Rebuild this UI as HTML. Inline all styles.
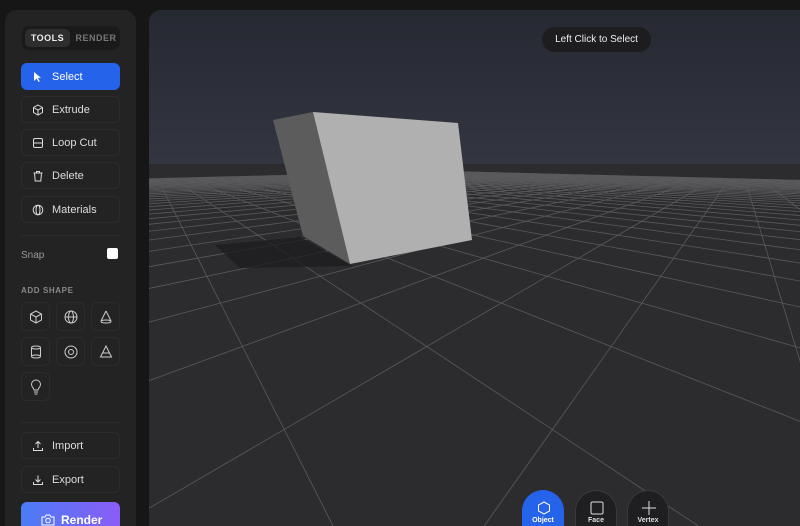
<!DOCTYPE html><html><head><style>
html,body{margin:0;width:800px;height:526px;overflow:hidden}
body{background:#161616;font-family:"Liberation Sans",sans-serif;position:relative}
.side{position:absolute;left:5px;top:10px;width:131px;height:516px;background:#232323;border-radius:12px 12px 0 0;overflow:hidden}
.tabs{position:absolute;left:17px;top:16px;width:98px;height:24px;background:#1a1a1a;border-radius:7px}
.tab{position:absolute;top:3px;height:18px;line-height:18px;font-size:9px;font-weight:bold;letter-spacing:.5px;text-align:center}
.btn{position:absolute;left:16px;width:99px;height:27px;border:1px solid #2c2c2c;border-radius:6px;color:#ddd;font-size:11px;line-height:27px;box-sizing:border-box}
.btn span{position:absolute;left:30px}
.btn svg{position:absolute;left:10px;top:7px}
.sq{position:absolute;width:29px;height:29px;border:1px solid #2c2c2c;border-radius:6px;box-sizing:border-box}
.sq svg{position:absolute;left:6px;top:6px}
.vp{position:absolute;left:149px;top:10px;width:651px;height:516px;border-radius:12px 0 0 0;overflow:hidden;background:#2c2c2f}
.pill{position:absolute;left:542px;top:27px;width:109px;height:25px;border-radius:13px;background:#1d1d1f;color:#eee;font-size:10px;line-height:25px;text-align:center}
.mode{position:absolute;top:490px;width:42px;height:36px;border-radius:21px 21px 0 0;background:#1f1f21;border:1px solid #3a3a3a;border-bottom:none;box-sizing:border-box;color:#ddd;font-size:7px;font-weight:bold;text-align:center;overflow:hidden}
.mode svg{position:absolute;left:13px;top:9px}
.mode div{position:absolute;top:26px;width:100%}
</style></head><body>
<div class="side">
<div class="tabs"><div class="tab" style="left:3px;width:45px;background:#2e2e2e;border-radius:5px;color:#eee">TOOLS</div><div class="tab" style="left:52px;width:44px;color:#777">RENDER</div></div>
<div class="btn" style="top:53px;background:#2563eb;border-color:#2563eb;color:#fff"><svg width="12" height="12" viewBox="0 0 12 12"><path d="M2 1v9l2.5-2.5 2 3.5 1.3-.7-2-3.4H9z" fill="#fff"/></svg><span>Select</span></div>
<div class="btn" style="top:86px"><svg width="12" height="12" viewBox="0 0 12 12" fill="none" stroke="#ddd"><path d="M6 1l4.5 2.5v5L6 11 1.5 8.5v-5zM1.5 3.5L6 6l4.5-2.5M6 6v5"/></svg><span>Extrude</span></div>
<div class="btn" style="top:119px"><svg width="12" height="12" viewBox="0 0 12 12" fill="none" stroke="#ddd"><rect x="1.5" y="1.5" width="9" height="9" rx="1.5"/><path d="M1.5 6h9"/></svg><span>Loop Cut</span></div>
<div class="btn" style="top:152px"><svg width="12" height="12" viewBox="0 0 12 12" fill="none" stroke="#ddd"><path d="M1.5 3h9M4.5 3V1.5h3V3M2.5 3l.7 8h5.6l.7-8"/></svg><span>Delete</span></div>
<div class="btn" style="top:186px"><svg width="12" height="12" viewBox="0 0 12 12" fill="none" stroke="#ddd"><circle cx="6" cy="6" r="4.8"/><ellipse cx="6" cy="6" rx="2" ry="4.8"/></svg><span>Materials</span></div>
<div style="position:absolute;left:16px;top:225px;width:99px;border-top:1px solid #2c2c2c"></div>
<div style="position:absolute;left:16px;top:240px;color:#999;font-size:10px">Snap</div>
<div style="position:absolute;left:102px;top:238px;width:11px;height:11px;background:#fff;border-radius:2px"></div>
<div style="position:absolute;left:16px;top:276px;color:#888;font-size:8px;font-weight:bold;letter-spacing:.6px">ADD SHAPE</div>
<div class="sq" style="left:16px;top:292px"><svg width="16" height="16" viewBox="0 0 16 16" fill="none" stroke="#ccc"><path d="M8 2l5.5 3v6L8 14l-5.5-3V5zM2.5 5L8 8l5.5-3M8 8v6"/></svg></div>
<div class="sq" style="left:51px;top:292px"><svg width="16" height="16" viewBox="0 0 16 16" fill="none" stroke="#ccc"><circle cx="8" cy="8" r="6"/><ellipse cx="8" cy="8" rx="2.5" ry="6"/><path d="M2 8h12"/></svg></div>
<div class="sq" style="left:86px;top:292px"><svg width="16" height="16" viewBox="0 0 16 16" fill="none" stroke="#ccc"><path d="M8 2L3 12M8 2l5 10"/><ellipse cx="8" cy="12.5" rx="5" ry="1.5"/></svg></div>
<div class="sq" style="left:16px;top:327px"><svg width="16" height="16" viewBox="0 0 16 16" fill="none" stroke="#ccc"><ellipse cx="8" cy="3.5" rx="4.5" ry="1.5"/><path d="M3.5 3.5v9M12.5 3.5v9"/><ellipse cx="8" cy="12.5" rx="4.5" ry="1.5"/></svg></div>
<div class="sq" style="left:51px;top:327px"><svg width="16" height="16" viewBox="0 0 16 16" fill="none" stroke="#ccc"><circle cx="8" cy="8" r="6"/><circle cx="8" cy="8" r="2.5"/></svg></div>
<div class="sq" style="left:86px;top:327px"><svg width="16" height="16" viewBox="0 0 16 16" fill="none" stroke="#ccc"><path d="M8 2l5.5 11h-11zM5 9h6"/></svg></div>
<div class="sq" style="left:16px;top:362px"><svg width="16" height="16" viewBox="0 0 16 16" fill="none" stroke="#ccc"><path d="M6 11c0-2-2.5-3-2.5-5.5a4.5 4.5 0 019 0C12.5 8 10 9 10 11zM6 13h4M6.5 15h3"/></svg></div>
<div style="position:absolute;left:16px;top:412px;width:99px;border-top:1px solid #2c2c2c"></div>
<div class="btn" style="top:422px"><svg width="12" height="12" viewBox="0 0 12 12" fill="none" stroke="#ddd"><path d="M6 8V1.5M3.5 4L6 1.5 8.5 4M1.5 8v2.5h9V8"/></svg><span>Import</span></div>
<div class="btn" style="top:456px"><svg width="12" height="12" viewBox="0 0 12 12" fill="none" stroke="#ddd"><path d="M6 1.5V8M3.5 5.5L6 8l2.5-2.5M1.5 8v2.5h9V8"/></svg><span>Export</span></div>
<div class="btn" style="top:492px;height:36px;line-height:36px;background:linear-gradient(90deg,#4a7cf6,#8b5cf6);border:none;color:#fff;font-weight:bold;font-size:12px"><svg style="left:20px;top:11px" width="14" height="13" viewBox="0 0 14 13" fill="none" stroke="#fff"><path d="M1 4h3l1.2-2h3.6L10 4h3v8H1z"/><circle cx="7" cy="7.5" r="2.3"/></svg><span style="left:40px">Render</span></div>
</div>
<div class="vp"><svg width="651" height="516" id="g">
<defs><linearGradient id="sky" x1="0" y1="0" x2="0" y2="1"><stop offset="0" stop-color="#262932"/><stop offset="1" stop-color="#333640"/></linearGradient></defs>
<rect width="651" height="155" fill="url(#sky)"/><rect y="154" width="651" height="372" fill="#2c2c2f"/>
</svg></div>
<svg style="position:absolute;left:0;top:0" width="800" height="526">
<polygon points="215,245 300,237 352,266 240,268" fill="#1e1e1f" opacity=".8"/>
<polygon points="273,120 313,112 350,264 303,236" fill="#5c5c5c"/>
<polygon points="313,112 458,123 472,240 350,264" fill="#b0b0b0"/>
</svg>
<div class="pill">Left Click to Select</div>
<div class="mode" style="left:522px;background:#2563eb;border-color:#2563eb;color:#fff"><svg width="16" height="16" viewBox="0 0 16 16" fill="none" stroke="#fff"><path d="M8 2l5.5 3v6L8 14l-5.5-3V5z"/></svg><div>Object</div></div>
<div class="mode" style="left:575px"><svg width="16" height="16" viewBox="0 0 16 16" fill="none" stroke="#ddd"><rect x="2" y="2" width="12" height="12" rx="1.5"/></svg><div>Face</div></div>
<div class="mode" style="left:627px"><svg width="16" height="16" viewBox="0 0 16 16" fill="none" stroke="#ddd"><path d="M8 1v14M1 8h14"/></svg><div>Vertex</div></div>
<script>
var s=document.getElementById('g'),ns='http://www.w3.org/2000/svg';
var cx=296,hy=154,f=295,h=1.4,a=0.785,c=Math.cos(a),sn=Math.sin(a),ox=0.5,oz=0.3;
function P(x,z){x-=ox;z-=oz;var X=x*c-z*sn,Z=x*sn+z*c;if(Z<0.05)return null;return[cx+f*X/Z,hy+f*h/Z];}
function line(p,q){var l=document.createElementNS(ns,'polyline');var pts=[];for(var t=0;t<=200;t++){var u=t/200,r=P(p[0]+(q[0]-p[0])*u,p[1]+(q[1]-p[1])*u);if(r)pts.push(r[0].toFixed(1)+','+r[1].toFixed(1));}l.setAttribute('points',pts.join(' '));l.setAttribute('fill','none');l.setAttribute('stroke','#5a5a5c');l.setAttribute('stroke-width',0.8);s.appendChild(l);}
for(var i=-40;i<=40;i++){line([i,-40],[i,40]);line([-40,i],[40,i]);}
</script>
</body></html>
